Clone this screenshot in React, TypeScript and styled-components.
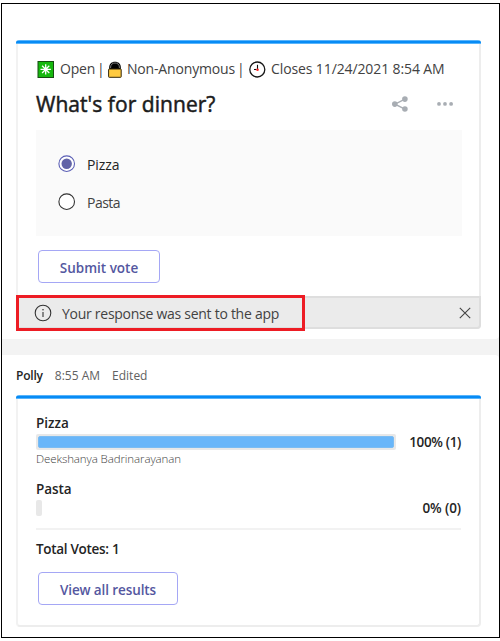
import React from "react";
import styled, { createGlobalStyle } from "styled-components";

const GlobalStyle = createGlobalStyle`
  * { box-sizing: border-box; }
  body {
    margin: 0;
    background: #fff;
    font-family: "Open Sans", "Noto Sans", sans-serif;
    color: #242424;
  }
`;

const Page = styled.main`
  width: 500px;
  height: 641px;
  padding: 3px 0 3px 1px;
  overflow: hidden;
`;

const Frame = styled.div`
  width: 499px;
  height: 635px;
  border: 1px solid #000;
  background: #f3f3f3;
  display: flex;
  flex-direction: column;
  gap: 16px;
`;

const Message = styled.section<{ $height: number; $top: number; $last?: boolean }>`
  flex: none;
  height: ${(p) => p.$height}px;
  padding: ${(p) => p.$top}px 17px 0 14px;
  background: #fff;
  border-radius: ${(p) => (p.$last ? "0 4px 0 0" : "0 0 4px 0")};
`;

const Card = styled.article<{ $height: number }>`
  position: relative;
  width: 465px;
  height: ${(p) => p.$height}px;
  border: 2px solid #ededed;
  border-left-color: #f2f2f2;
  border-top: 0;
  border-radius: 3px 3px 4px 4px;
  display: flex;
  flex-direction: column;
  > * { flex: none; }
`;

const Accent = styled.div`
  height: 4px;
  margin: 0 -2px;
  border-radius: 3px 3px 0 0;
  background: linear-gradient(#58b4fb 0 1px, #078bf5 1px 3px, #58b4fb 3px 4px);
`;

const Text = styled.span<{ $size?: number; $weight?: number; $color?: string; $track?: number }>`
  font-size: ${(p) => p.$size ?? 14}px;
  font-weight: ${(p) => p.$weight ?? 400};
  color: ${(p) => p.$color ?? "#424242"};
  letter-spacing: ${(p) => p.$track ?? 0}px;
  line-height: 18px;
  white-space: nowrap;
`;

const StrongText = styled(Text)`
  font-size: ${(p) => p.$size ?? 13.5}px;
  font-weight: 600;
`;

const Title = styled.h1`
  margin: 0;
  font-size: 21px;
  font-weight: 400;
  line-height: 28px;
  letter-spacing: 0.05px;
  color: #1c1c1c;
  white-space: nowrap;
  -webkit-text-stroke: 0.5px currentColor;
`;

const MetaRow = styled.div`
  display: grid;
  grid-template-columns: 23px 37px 11px 19px 110px 12px 22px auto;
  height: 18px;
  margin: 16px 0 0 19px;
  align-items: center;
  svg { display: block; }
`;

const TitleRow = styled.div`
  display: flex;
  align-items: center;
  height: 28px;
  margin: 12px 25px 0 18px;
`;

const Actions = styled.div`
  display: flex;
  align-items: center;
  gap: 28px;
  margin-left: auto;
  svg { display: block; }
`;

const Options = styled.div`
  height: 106px;
  margin: 12px 17px 0 18px;
  padding: 25px 0 0 22px;
  background: #fafafa;
  display: flex;
  flex-direction: column;
  gap: 20px;
`;

const Option = styled.label`
  display: flex;
  align-items: flex-start;
  gap: 11px;
  height: 18px;
  svg { display: block; }
  span { margin-top: 1px; }
`;

const Button = styled.button<{ $width: number }>`
  width: ${(p) => p.$width}px;
  height: 33px;
  margin: 14px 0 0 20px;
  padding: 2px 0 0;
  border: 1px solid #a5a7f5;
  border-radius: 4px;
  background: #fff;
  font-family: inherit;
`;

const Notice = styled.div`
  display: flex;
  align-items: center;
  height: 33px;
  margin: 13px -2px 0;
  padding: 0 8px 0 18px;
  border: 2px solid #dedede;
  border-width: 2px 2px 2px 0;
  border-radius: 0 0 4px 4px;
  background: #ebebeb;
  gap: 10px;
  svg { display: block; flex: none; }
  span { margin-top: 2px; }
  svg:last-child { margin-left: auto; }
`;

const Highlight = styled.div`
  position: absolute;
  left: -2px;
  bottom: -4px;
  width: 289px;
  height: 36px;
  border: 3px solid #ed1c24;
`;

const Byline = styled.header`
  display: flex;
  gap: 12px;
  height: 18px;
  margin-bottom: 10px;
`;

const Results = styled.div`
  display: flex;
  flex-direction: column;
  gap: 12px;
  margin: 15px 18px 0;
`;

const Result = styled.div`
  display: flex;
  justify-content: space-between;
`;

const Answer = styled.div`
  display: flex;
  flex-direction: column;
`;

const Score = styled(StrongText)`
  margin-top: 19px;
`;

const Track = styled.div<{ $full?: boolean }>`
  width: ${(p) => (p.$full ? 360 : 6)}px;
  height: 16px;
  margin-top: 2px;
  padding: 2px;
  border-radius: 2px;
  background: #e8e8e8;
`;

const Fill = styled.div`
  height: 12px;
  border-radius: 2px;
  border: 1px solid #7bbcf2;
  background: #69b6f9;
`;

const Divider = styled.hr`
  width: 425px;
  height: 2px;
  border: 0;
  margin: 11px 0 10px 18px;
  background: #f2f2f2;
`;

const Total = styled(StrongText)`
  margin-left: 18px;
`;

const OpenIcon = () => (
  <svg width="17" height="17" viewBox="0 0 17 17">
    <rect x="1" y=".5" width="15.5" height="16" fill="#16b80e" stroke="#164d12" />
    <path d="M8.7 3.2v10.4M3.5 8.4h10.4M5.1 4.8l7.2 7.2M12.3 4.8l-7.2 7.2" stroke="#fff" strokeWidth="1.3" />
  </svg>
);

const LockIcon = () => (
  <svg width="14" height="17" viewBox="0 0 14 17">
    <path d="M1.2 9V6.2C1.2 2.8 3.6.7 7 .7s5.8 2.1 5.8 5.5V9z" fill="#000" />
    <path d="M2.6 7V6C2.8 3.4 4.5 2 7 2s4.2 1.4 4.4 4v1" fill="none" stroke="#aaa" strokeWidth=".7" />
    <rect x=".6" y="8" width="12.6" height="8.3" rx=".6" fill="#ffca3f" stroke="#33270b" strokeWidth="1" />
  </svg>
);

const ClockIcon = () => (
  <svg width="17" height="17" viewBox="0 0 17 17">
    <circle cx="8.3" cy="8.5" r="7.5" fill="#fff" stroke="#161616" strokeWidth="1.3" />
    <path d="M8.5 3.8v4.6" stroke="#111" strokeWidth="1.1" />
    <path d="M5 8.5h2.5" stroke="#111" strokeWidth="1.1" />
    <circle cx="8.5" cy="8.7" r="1.3" fill="#f22" />
  </svg>
);

const ShareIcon = () => (
  <svg width="17" height="17" viewBox="0 0 17 17" fill="#a8adb3">
    <path d="M12.9 3.2 3 8.2l9.9 5" fill="none" stroke="#a8adb3" strokeWidth="1.4" />
    <circle cx="12.9" cy="3.1" r="2.8" />
    <circle cx="2.8" cy="8.1" r="2.8" />
    <circle cx="12.9" cy="13" r="2.8" />
  </svg>
);

const MoreIcon = () => (
  <svg width="17" height="5" viewBox="0 0 17 5" fill="#a8adb3">
    <circle cx="2" cy="1.9" r="1.9" />
    <circle cx="8" cy="1.9" r="1.9" />
    <circle cx="14.1" cy="1.9" r="1.9" />
  </svg>
);

const Radio = ({ checked }: { checked?: boolean }) => (
  <svg width="18" height="18" viewBox="0 0 18 18">
    <circle cx="8.7" cy="8.7" r="7.8" fill="#fff" stroke={checked ? "#5b5fb5" : "#333"} strokeWidth="1.1" />
    {checked && <circle cx="8.7" cy="8.7" r="5.2" fill="#6264a7" />}
  </svg>
);

const InfoIcon = () => (
  <svg width="18" height="18" viewBox="0 0 18 18">
    <circle cx="9" cy="9" r="7.8" fill="none" stroke="#333" strokeWidth="1.1" />
    <path d="M9 8v5" stroke="#333" strokeWidth="1.1" />
    <circle cx="9" cy="5.8" r=".8" fill="#333" />
  </svg>
);

const CloseIcon = () => (
  <svg width="12" height="12" viewBox="0 0 12 12">
    <path d="m.8.8 10.4 10.4M11.2.8.8 11.2" stroke="#444" strokeWidth="1.1" />
  </svg>
);

export default function App() {
  return (
    <Page>
      <GlobalStyle />
      <Frame>
        <Message $height={335} $top={36}>
          <Card $height={289}>
            <Accent />
            <MetaRow>
              <OpenIcon />
              <Text $track={-0.2}>Open</Text>
              <Text>|</Text>
              <LockIcon />
              <Text $track={-0.17}>Non-Anonymous</Text>
              <Text>|</Text>
              <ClockIcon />
              <Text $track={-0.11}>Closes 11/24/2021 8:54 AM</Text>
            </MetaRow>
            <TitleRow>
              <Title>What's for dinner?</Title>
              <Actions>
                <ShareIcon />
                <MoreIcon />
              </Actions>
            </TitleRow>
            <Options>
              <Option>
                <Radio checked />
                <Text $color="#242424" $track={-0.1}>Pizza</Text>
              </Option>
              <Option>
                <Radio />
                <Text $track={-0.5}>Pasta</Text>
              </Option>
            </Options>
            <Button $width={122}>
              <StrongText $color="#5457a0">Submit vote</StrongText>
            </Button>
            <Notice>
              <InfoIcon />
              <Text $track={-0.27}>Your response was sent to the app</Text>
              <CloseIcon />
            </Notice>
            <Highlight />
          </Card>
        </Message>
        <Message $height={282} $top={12} $last>
          <Byline>
            <StrongText $size={12} $track={-0.2} $color="#242424">Polly</StrongText>
            <Text $size={12} $color="#616161">8:55 AM</Text>
            <Text $size={12} $color="#616161">Edited</Text>
          </Byline>
          <Card $height={232}>
            <Accent />
            <Results>
              <Result>
                <Answer>
                  <StrongText $color="#242424">Pizza</StrongText>
                  <Track $full><Fill /></Track>
                  <Text $size={11.5} $weight={300} $track={-0.1}>Deekshanya Badrinarayanan</Text>
                </Answer>
                <Score $color="#242424" $track={-0.35}>100% (1)</Score>
              </Result>
              <Result>
                <Answer>
                  <StrongText $color="#242424" $track={-0.1}>Pasta</StrongText>
                  <Track />
                </Answer>
                <Score $color="#242424" $track={-0.1}>0% (0)</Score>
              </Result>
            </Results>
            <Divider />
            <Total $color="#242424" $track={-0.3}>Total Votes: 1</Total>
            <Button $width={140}>
              <StrongText $color="#5457a0" $track={-0.1}>View all results</StrongText>
            </Button>
          </Card>
        </Message>
      </Frame>
    </Page>
  );
}
